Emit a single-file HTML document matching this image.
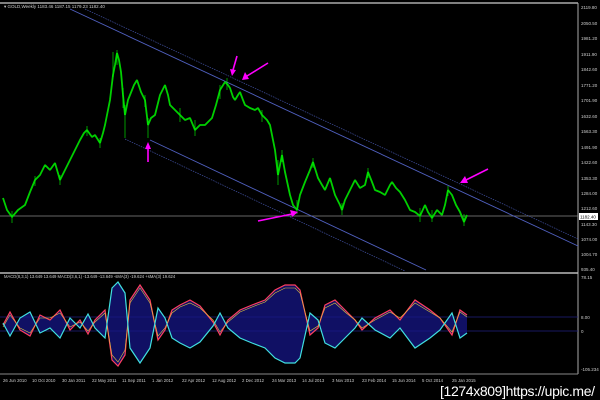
<!DOCTYPE html>
<html><head><meta charset="utf-8"><style>
html,body{margin:0;padding:0;background:#000;width:600px;height:400px;overflow:hidden}
svg{display:block}
text{font-family:"Liberation Sans",sans-serif}
</style></head><body>
<svg width="600" height="400" viewBox="0 0 600 400">
<rect width="600" height="400" fill="#000"/>
<line x1="0" y1="3" x2="578" y2="3" stroke="#aaa" stroke-width="1.5"/>
<line x1="578" y1="3" x2="578" y2="374" stroke="#aaa"/>
<line x1="0" y1="273" x2="578" y2="273" stroke="#bbb" stroke-width="1.5"/>
<line x1="0" y1="374" x2="578" y2="374" stroke="#888"/>
<text x="4" y="8" fill="#ccc" font-size="4.5">▾ GOLD,Weekly  1183.46 1187.15 1179.23 1182.40</text>
<g fill="#ccc" font-size="4.5">
<text x="581" y="9">2119.80</text><text x="581" y="25">2050.50</text><text x="581" y="40">1981.20</text>
<text x="581" y="56">1911.90</text><text x="581" y="71">1842.60</text><text x="581" y="87">1771.20</text>
<text x="581" y="102">1701.90</text><text x="581" y="118">1632.60</text><text x="581" y="133">1563.30</text>
<text x="581" y="149">1491.90</text><text x="581" y="164">1422.60</text><text x="581" y="180">1353.30</text>
<text x="581" y="195">1284.00</text><text x="581" y="210">1212.60</text><text x="581" y="226">1143.30</text>
<text x="581" y="241">1074.00</text><text x="581" y="256">1004.70</text><text x="581" y="271">935.40</text>
<text x="581" y="279">78.15</text><text x="581" y="319">8.00</text><text x="581" y="333">0</text><text x="581" y="371">-105.234</text>
</g>
<rect x="579" y="213" width="19" height="7" fill="#fff"/>
<text x="580" y="218.5" fill="#000" font-size="4.5">1182.40</text>
<line x1="0" y1="216" x2="578" y2="216" stroke="#888" stroke-width="0.8"/>
<!-- channels -->
<line x1="70" y1="9" x2="578" y2="246" stroke="#5060c0" stroke-width="0.9"/>
<line x1="85" y1="9" x2="578" y2="239" stroke="#4050a0" stroke-width="0.7" stroke-dasharray="1.5,1"/>
<line x1="150" y1="140" x2="426" y2="270" stroke="#5060c0" stroke-width="0.9"/>
<line x1="125" y1="139" x2="405" y2="271" stroke="#4050a0" stroke-width="0.7" stroke-dasharray="1.5,1"/>
<!-- price -->
<polyline fill="none" stroke="#00d000" stroke-width="1.8" stroke-linejoin="bevel" points="3,198 7,210 12,217 18,210 25,205 30,192 35,180 40,175 45,165 50,170 55,163 60,180 65,170 70,160 75,150 80,140 84,133 87,130 92,137 95,135 100,143 103,133 105,125 108,110 110,100 113,75 115,65 117,53 119,60 121,72 123,95 125,115 128,100 130,95 134,85 137,80 141,92 145,100 148,125 151,118 155,115 160,95 165,85 168,95 170,105 175,110 180,115 185,120 190,118 195,130 200,125 205,125 212,118 216,105 220,90 225,82 228,85 230,88 233,97 235,100 238,95 240,92 243,100 245,105 250,108 255,110 258,108 262,115 267,120 270,125 273,140 275,150 278,175 282,155 285,172 290,195 293,205 297,210 300,195 305,182 310,170 313,162 318,178 322,185 325,190 330,178 335,195 340,205 342,210 345,200 350,190 355,180 360,188 365,185 368,172 372,182 375,190 380,192 385,195 390,185 392,182 396,188 400,192 405,200 410,210 415,212 420,216 425,205 428,212 432,218 437,210 442,215 445,205 448,190 452,195 456,205 460,212 464,222 467,215"/>
<g stroke="#00ff00" stroke-width="0.6">
<path d="M113,52v25M117,50v15M125,105v33M148,118v20M123,88v20M145,95v12M180,108v14M195,120v16M220,85v14M227,78v12M262,110v12M278,160v25M282,150v12M297,200v14M313,158v10M342,203v12M368,168v10M420,208v14M432,210v12M448,186v10M464,214v12M12,211v12M35,176v10M60,175v10M87,126v10M100,138v10"/>
</g>
<!-- arrows -->
<g stroke="#ff00ff" stroke-width="1.6" fill="#ff00ff">
<line x1="237" y1="56" x2="233" y2="70"/><polygon points="230,69 236,70 232,76" stroke="none"/>
<line x1="268" y1="63" x2="247" y2="76"/><polygon points="245,72 249,79 242,80" stroke="none"/>
<line x1="148" y1="162" x2="148" y2="148"/><polygon points="145,149 151,149 148,142" stroke="none"/>
<line x1="258" y1="221" x2="292" y2="214"/><polygon points="290,210 292,217 298,212" stroke="none"/>
<line x1="488" y1="169" x2="466" y2="180"/><polygon points="465,176 468,183 460,183" stroke="none"/>
</g>
<!-- MACD -->
<text x="4" y="278" fill="#ccc" font-size="4.2">MACD(8,3,1) 13.649 13.649  MACD(3,6,1) -13.649 -13.649  -sMA(3) -19.624  +sMA(3) 19.624</text>
<line x1="0" y1="317" x2="578" y2="317" stroke="#202080" stroke-width="0.7"/>
<line x1="0" y1="331" x2="578" y2="331" stroke="#202080" stroke-width="0.7"/>
<polygon fill="#151585" opacity="0.75" points="3,325 10,312 20,330 30,336 40,315 50,320 60,310 70,330 80,320 88,334 95,320 105,310 112,360 118,366 125,355 130,300 140,285 150,300 158,340 165,330 172,310 180,305 190,300 200,306 213,322 220,335 228,320 240,310 252,305 265,300 275,290 285,285 295,285 300,290 310,335 318,328 325,305 335,300 345,310 355,320 362,330 375,318 390,310 400,320 415,300 430,310 440,318 452,335 460,310 467,315 467,333 460,338 452,313 440,330 430,338 415,348 400,328 390,338 375,330 362,318 355,328 345,338 335,348 325,343 318,320 310,313 300,358 295,363 285,363 275,358 265,348 252,343 240,338 228,328 220,313 213,326 200,342 190,348 180,343 172,338 165,318 158,308 150,348 140,363 130,348 125,293 118,282 112,288 105,338 95,328 88,314 80,328 70,318 60,338 50,328 40,333 30,312 20,318 10,336"/>
<polyline fill="none" stroke="#ff4060" stroke-width="1.2" points="3,325 10,312 20,330 30,336 40,315 50,320 60,310 70,330 80,320 88,334 95,320 105,310 112,360 118,366 125,355 130,300 140,285 150,300 158,340 165,330 172,310 180,305 190,300 200,306 213,322 220,335 228,320 240,310 252,305 265,300 275,290 285,285 295,285 300,290 310,335 318,328 325,305 335,300 345,310 355,320 362,330 375,318 390,310 400,320 415,300 430,310 440,318 452,335 460,310 467,315"/>
<polyline fill="none" stroke="#e0c040" stroke-width="0.6" points="3,327 10,315 20,328 30,333 40,318 50,318 60,313 70,327 80,322 88,331 95,322 105,313 112,355 118,362 125,350 130,303 140,288 150,303 158,336 165,328 172,313 180,307 190,303 200,308 213,320 220,332 228,322 240,312 252,307 265,302 275,293 285,288 295,288 300,293 310,331 318,326 325,308 335,303 345,312 355,320 362,328 375,320 390,312 400,318 415,303 430,312 440,318 452,332 460,312 467,317"/>
<polyline fill="none" stroke="#40e0e0" stroke-width="1.2" points="3,323 10,336 20,318 30,312 40,333 50,328 60,338 70,318 80,328 88,314 95,328 105,338 112,288 118,282 125,293 130,348 140,363 150,348 158,308 165,318 172,338 180,343 190,348 200,342 213,326 220,313 228,328 240,338 252,343 265,348 275,358 285,363 295,363 300,358 310,313 318,320 325,343 335,348 345,338 355,328 362,318 375,330 390,338 400,328 415,348 430,338 440,330 452,313 460,338 467,333"/>
<g fill="#ccc" font-size="4.3">
<text x="3" y="382">26 Jun 2010</text><text x="32" y="382">10 Oct 2010</text><text x="62" y="382">30 Jan 2011</text>
<text x="92" y="382">22 May 2011</text><text x="122" y="382">11 Sep 2011</text><text x="152" y="382">1 Jan 2012</text>
<text x="182" y="382">22 Apr 2012</text><text x="212" y="382">12 Aug 2012</text><text x="242" y="382">2 Dec 2012</text>
<text x="272" y="382">24 Mar 2013</text><text x="302" y="382">14 Jul 2013</text><text x="332" y="382">3 Nov 2013</text>
<text x="362" y="382">23 Feb 2014</text><text x="392" y="382">15 Jun 2014</text><text x="422" y="382">5 Oct 2014</text>
<text x="452" y="382">25 Jan 2015</text>
</g>
<text x="440" y="396" fill="#fff" font-size="14" font-family="Liberation Mono, monospace" textLength="155">[1274x809]https://upic.me/</text>
</svg>
</body></html>
